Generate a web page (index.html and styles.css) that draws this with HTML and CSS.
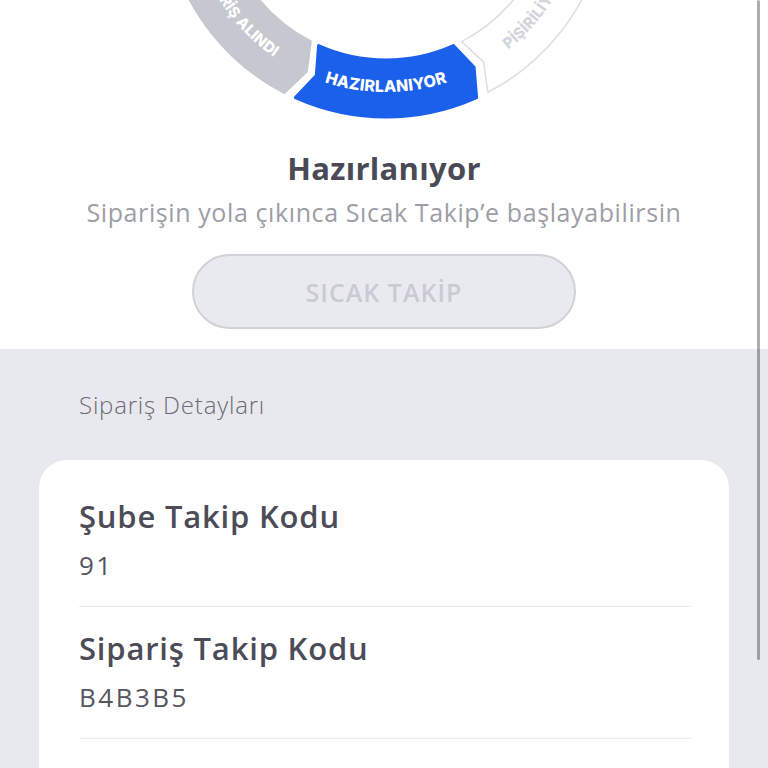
FILE: index.html
```html
<!DOCTYPE html>
<html lang="tr">
<head>
<meta charset="utf-8">
<title>Sipariş Takip</title>
<link rel="stylesheet" href="styles.css">
</head>
<body>
<div class="page">
  <section class="tracker">
    <svg class="wheel" width="768" height="125" viewBox="0 0 768 125" xmlns="http://www.w3.org/2000/svg">
      <defs>
        <path id="arcGrey" d="M189.4 -92.6 A197 197 0 0 0 330.4 84"/>
        <path id="arcBlue" d="M273 56.4 A197 197 0 0 0 499 56.4"/>
        <path id="arcWhite" d="M441.6 84 A197 197 0 0 0 582.6 -92.6"/>
      </defs>
      <path class="seg seg-done" d="M310.3 41.6 L306.4 71.4 L284.2 92.3 A222 222 0 0 1 171.1 -49.4 L201.5 -46.8 L226.3 -63.7 A165 165 0 0 0 310.3 41.6 Z"/>
      <path class="seg seg-active" d="M453.4 45.6 A165 165 0 0 1 318.6 45.6 L316.3 75.5 L295.4 97.6 A222 222 0 0 0 476.6 97.6 L474.1 67.3 Z"/>
      <path class="seg seg-next" d="M545.7 -63.7 L575.6 -66.4 L600.9 -49.4 A222 222 0 0 1 487.8 92.3 L483.6 62.1 L461.7 41.6 A165 165 0 0 0 545.7 -63.7 Z"/>
      <text class="seg-text seg-text-done"><textPath href="#arcGrey" startOffset="50%" text-anchor="middle">SİPARİŞ ALINDI</textPath></text>
      <text class="seg-text seg-text-active"><textPath href="#arcBlue" startOffset="50%" text-anchor="middle">HAZIRLANIYOR</textPath></text>
      <text class="seg-text seg-text-next"><textPath href="#arcWhite" startOffset="50%" text-anchor="middle">PİŞİRİLİYOR</textPath></text>
    </svg>
    <h1 class="status-title">Hazırlanıyor</h1>
    <p class="status-sub">Siparişin yola çıkınca Sıcak Takip’e başlayabilirsin</p>
    <button class="track-btn" type="button" disabled>SICAK TAKİP</button>
  </section>

  <section class="details">
    <h2 class="details-title">Sipariş Detayları</h2>
    <div class="card">
      <div class="row">
        <div class="row-label">Şube Takip Kodu</div>
        <div class="row-value">91</div>
      </div>
      <div class="row">
        <div class="row-label">Sipariş Takip Kodu</div>
        <div class="row-value">B4B3B5</div>
      </div>
      <div class="row">
        <div class="row-label">Sipariş Tarihi</div>
        <div class="row-value">12.05.2023</div>
      </div>
    </div>
  </section>
  <div class="scrollbar"></div>
</div>
</body>
</html>
```

FILE: styles.css
```css
html, body {
  margin: 0;
  padding: 0;
  overflow: hidden;
  background: #e8e9ee;
}

body {
  font-family: "Open Sans", "Lato", sans-serif;
}

.page {
  position: relative;
  width: 768px;
  height: 768px;
  overflow: hidden;
}

.tracker {
  background: #ffffff;
  display: flex;
  flex-direction: column;
  align-items: center;
  padding-bottom: 20px;
}

.wheel {
  display: block;
}

.seg {
  stroke-width: 3;
  stroke-linejoin: round;
}

.seg-done {
  fill: #c6c8d0;
  stroke: #c6c8d0;
}

.seg-active {
  fill: #1a60ea;
  stroke: #1a60ea;
}

.seg-next {
  fill: #ffffff;
  stroke: #dfe0e5;
  stroke-width: 1.6;
}

.seg-text {
  font-family: "Inter", "Lato", sans-serif;
  font-weight: 800;
  font-size: 16px;
  letter-spacing: 0.2px;
}

.seg-text-done {
  fill: #ffffff;
  font-size: 15px;
}

.seg-text-active {
  fill: #ffffff;
}

.seg-text-next {
  fill: #d4d5db;
  font-size: 15px;
}

.status-title {
  margin: 25px 0 0;
  font-size: 31px;
  line-height: 36px;
  font-weight: 700;
  letter-spacing: 0.3px;
  color: #4a4a56;
}

.status-sub {
  margin: 12px 0 0;
  font-size: 25px;
  line-height: 28px;
  letter-spacing: 0.6px;
  color: #9d9da5;
}

.track-btn {
  margin-top: 28px;
  width: 384px;
  height: 75px;
  border: 2px solid #d0d1d9;
  border-radius: 38px;
  background: #e9eaf0;
  color: #c9cad2;
  font-family: "Open Sans", sans-serif;
  font-size: 25px;
  font-weight: 600;
  letter-spacing: 1px;
}

.details {
  padding: 42px 39px 0;
}

.details-title {
  margin: 0 0 41px;
  padding-left: 40px;
  font-size: 24px;
  line-height: 28px;
  font-weight: 300;
  letter-spacing: 0.8px;
  color: #6b6b75;
}

.card {
  background: #ffffff;
  border-radius: 28px;
  padding: 15px 38px 0 40px;
}

.row {
  padding: 24px 0 26px;
  border-bottom: 1px solid #ebebef;
}

.row-label {
  font-size: 31px;
  line-height: 34px;
  font-weight: 600;
  letter-spacing: 0.8px;
  color: #4c4c58;
}

.row-value {
  margin-top: 17px;
  font-size: 26px;
  line-height: 30px;
  letter-spacing: 2.5px;
  color: #55555f;
}

.scrollbar {
  position: absolute;
  left: 757px;
  top: 0;
  width: 3px;
  height: 660px;
  border-radius: 2px;
  background: rgba(0, 0, 0, 0.32);
}
```
